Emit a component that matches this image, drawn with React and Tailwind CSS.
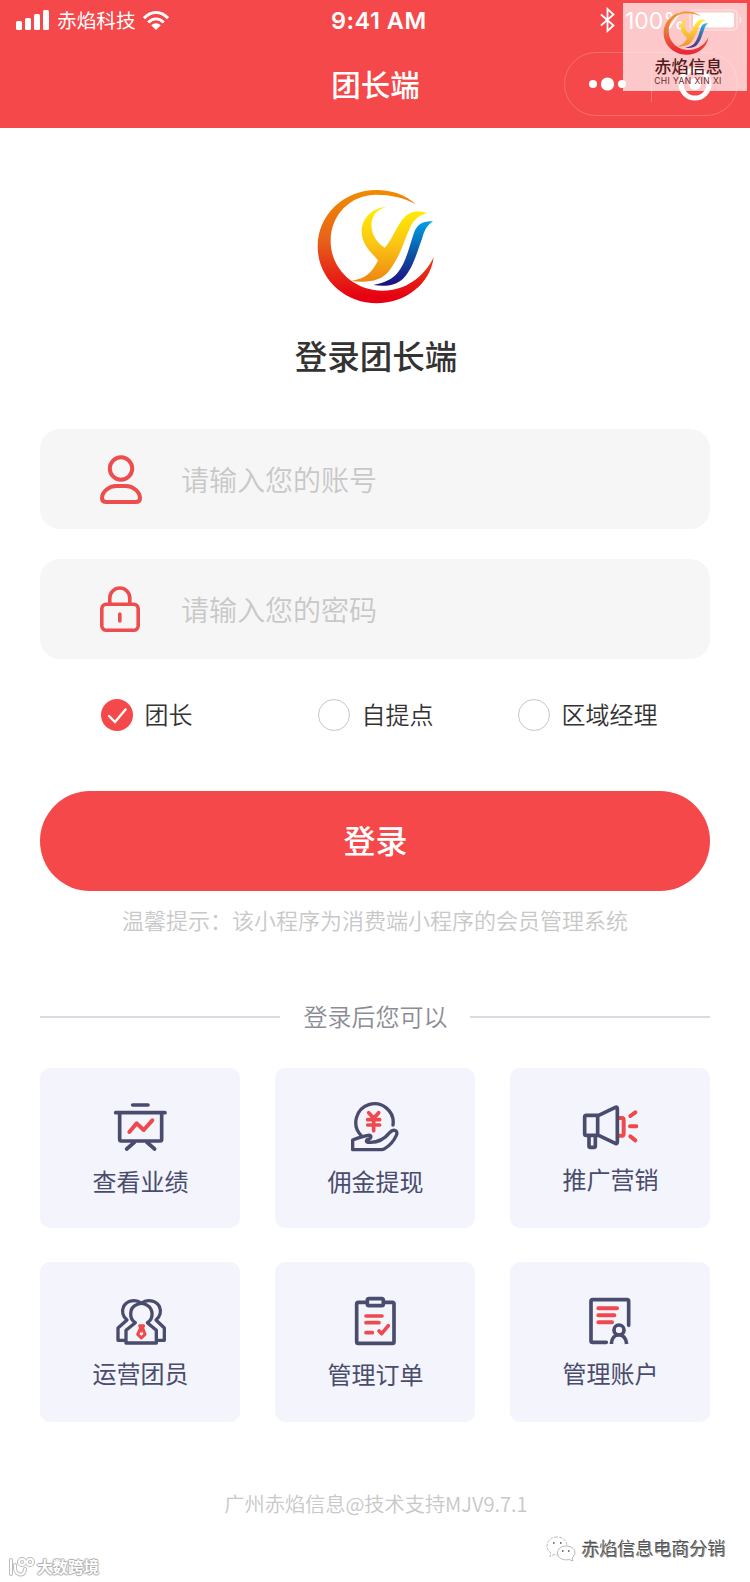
import React, { useState } from 'react';

const roles = [
  { id: 'leader', label: '团长', width: 'w-[217px]' },
  { id: 'pickup', label: '自提点', width: 'w-[200px]' },
  { id: 'manager', label: '区域经理', width: 'w-[145px]' },
];

const Logo = ({ id, className }) => (
  <svg viewBox="108 56 357 345" className={className} preserveAspectRatio="none">
    <defs>
      <linearGradient id={`${id}-ring`} x1="0" y1="0" x2="0" y2="1">
        <stop offset="0" stopColor="#f08c00" />
        <stop offset="0.45" stopColor="#e8601a" />
        <stop offset="0.95" stopColor="#e60012" />
      </linearGradient>
      <linearGradient id={`${id}-y`} x1="0" y1="0" x2="0" y2="1">
        <stop offset="0" stopColor="#fff000" />
        <stop offset="0.5" stopColor="#fac514" />
        <stop offset="1" stopColor="#ee8512" />
      </linearGradient>
      <linearGradient id={`${id}-j`} x1="0" y1="0" x2="0" y2="1">
        <stop offset="0" stopColor="#00a0e9" />
        <stop offset="0.5" stopColor="#0b55a5" />
        <stop offset="0.95" stopColor="#1d1383" />
      </linearGradient>
    </defs>
    <path
      fill={`url(#${id}-ring)`}
      d="M408 102C376 73 335 59 290 59C192 59 113 133 113 229C113 324 194 399 290 399C376 399 452 340 461 261C431 322 375 361 309 361C219 361 152 294 152 212C152 131 214 73 288 73C334 73 375 83 408 102Z"
    />
    <path
      fill={`url(#${id}-y)`}
      d="M318 110C276 113 245 144 245 184C246 224 274 246 294 270C276 309 256 324 214 332C262 337 302 334 327 302C363 256 374 203 393 166C402 147 419 134 442 128C418 120 392 121 373 141C349 168 336 210 314 232C289 215 271 190 275 155C279 131 294 117 318 110Z"
    />
    <path
      fill={`url(#${id}-j)`}
      d="M459 153C430 151 412 160 402 187C386 235 377 277 354 306C338 326 315 338 280 344C315 349 347 346 369 325C399 295 411 245 426 205C433 181 441 164 459 153Z"
    />
  </svg>
);

const cardIcon = 'h-[54px] w-[60px] shrink-0';
const dark = { fill: 'none', stroke: '#4a4c6d', strokeWidth: 10, strokeLinecap: 'round', strokeLinejoin: 'round' };
const red = { ...dark, stroke: '#ee4a4d' };

const ChartIcon = () => (
  <svg viewBox="240 120 180 162" className={cardIcon}>
    <path {...dark} strokeWidth="11" d="M308 135H354M257 158H405M269 160V238Q269 243 274 243H390Q395 243 395 238V160M314 246L290 267M350 246L374 267" />
    <path {...red} strokeWidth="12" d="M298 216L320 190L341 210L367 181" />
  </svg>
);

const CashIcon = () => (
  <svg viewBox="240 120 180 162" className={cardIcon}>
    <path {...dark} d="M288 226A56 56 0 1 1 384 195" />
    <path {...dark} strokeLinecap="butt" d="M263 269V240C275 235 296 228 309 226C323 224 319 237 306 239C303 243 303 246 309 247C342 250 361 234 374 218C385 205 401 211 394 226C385 246 372 258 359 266Q355 269 349 269Z" />
    <path {...red} strokeWidth="11" d="M311 158L326 175L341 158M326 175V212M308 179H344M308 195H344" />
  </svg>
);

const HornIcon = () => (
  <svg viewBox="240 120 180 162" className={cardIcon}>
    <path {...red} strokeWidth="12" d="M356 174H366Q371 174 371 179V222Q371 227 366 227H356M391 168L406 157M390 199H409M391 229L406 241" />
    <path {...dark} strokeWidth="11" d="M259 166H296L346 142Q352 139 352 146V246Q352 253 346 250L296 226H259Q254 226 254 221V171Q254 166 259 166ZM293 168V225M267 230V258Q267 262 271 262H282Q286 262 286 258V230" />
  </svg>
);

const TeamIcon = () => (
  <svg viewBox="240 117 180 162" className={cardIcon}>
    <path {...dark} strokeLinecap="butt" d="M333 144C318 132 291 136 281 154C274 169 279 185 291 195L264 219V256H287M335 144C350 132 378 136 388 154C395 169 390 185 378 195L403 219V256H380" />
    <path {...dark} d="M316 203C296 191 299 160 316 151C328 144 342 144 352 151C370 162 372 191 352 203L379 226V264H288V226Z" />
    <path fill="#f3f4fc" d="M322 198H346V212H322Z" />
    <path {...red} strokeWidth="9" d="M329 212H341L338 219L345 238L334 249L323 238L332 219Z" />
    <path {...red} strokeWidth="6" d="M334 218V230" />
  </svg>
);

const OrderIcon = () => (
  <svg viewBox="240 117 180 162" className={cardIcon}>
    <path {...dark} strokeWidth="11" d="M305 142H280Q275 142 275 147V260Q275 265 280 265H382Q387 265 387 260V147Q387 142 382 142H357M312 131H350Q355 131 355 136V147Q355 152 350 152H312Q307 152 307 147V136Q307 131 312 131Z" />
    <path {...red} strokeWidth="11" d="M303 183H351M303 203H342M303 233H322M342 228L350 236L370 212" />
  </svg>
);

const AccountIcon = () => (
  <svg viewBox="945 117 180 162" className={cardIcon}>
    <path {...dark} strokeWidth="11" d="M1091 211V139Q1091 134 1086 134H983Q978 134 978 139V257Q978 262 983 262H1024" />
    <circle {...dark} strokeWidth="11" cx="1062" cy="225" r="15" />
    <path {...dark} strokeWidth="11" strokeLinecap="butt" d="M1039 267C1041 230 1082 230 1085 267" />
    <path {...red} strokeWidth="12" d="M1000 160H1056M1000 181H1048M1000 202H1041" />
  </svg>
);

const features = [
  { label: '查看业绩', icon: ChartIcon, pad: 'mt-[9px]' },
  { label: '佣金提现', icon: CashIcon, pad: 'mt-[9px]' },
  { label: '推广营销', icon: HornIcon, pad: 'mt-[7px]' },
  { label: '运营团员', icon: TeamIcon, pad: 'mt-[7px]' },
  { label: '管理订单', icon: OrderIcon, pad: 'mt-[8px]' },
  { label: '管理账户', icon: AccountIcon, pad: 'mt-[7px]' },
];

const StatusBar = () => (
  <div className="flex h-10 items-center pl-4 font-['Inter','Noto_Sans_CJK_SC',sans-serif]">
    <svg viewBox="0 0 33 20" className="h-5 w-[33px]" fill="#fff">
      <rect x="0" y="11" width="6" height="9" rx="1.5" />
      <rect x="9" y="8" width="6" height="12" rx="1.5" />
      <rect x="18" y="4" width="6" height="16" rx="1.5" />
      <rect x="27" y="0" width="6" height="20" rx="1.5" />
    </svg>
    <span className="ml-2 w-[86px] pt-px text-[19.7px] leading-10">赤焰科技</span>
    <svg viewBox="0 0 26 19" className="h-[19px] w-[26px]" fill="none" stroke="#fff" strokeWidth="3">
      <path d="M1 7.2C8-0.4 18-0.4 25 7.2M5.2 11.5C10 6.8 16 6.8 20.8 11.5" />
      <path fill="#fff" stroke="none" d="M8.2 14.3C11 11.6 15 11.6 17.8 14.3L13 19Z" />
    </svg>
    <span className="ml-[162px] w-[269px] pt-px text-[23.5px] font-semibold leading-10 tracking-[0.5px]">9:41 AM</span>
    <svg viewBox="0 0 15 26" className="h-[26px] w-[15px]" fill="none" stroke="#fff" strokeWidth="1.8">
      <path d="M1 7.5L13.5 18.5L7.5 24V2L13.5 7.5L1 18.5" />
    </svg>
    <span className="ml-[10px] w-[64px] pt-px text-[23px] leading-10">100%</span>
    <svg viewBox="0 0 54 22" className="h-[22px] w-[54px]" fill="#fff">
      <rect x="1" y="1" width="47" height="20" rx="4" fill="none" stroke="#fff" strokeOpacity="0.4" strokeWidth="1.6" />
      <rect x="4" y="3.5" width="41" height="15" rx="2" />
      <path opacity="0.5" d="M50.5 7.5C53.5 8.5 53.5 13.5 50.5 14.5Z" />
    </svg>
  </div>
);

const Header = () => (
  <header className="relative h-32 bg-[#f5484a] text-white">
    <StatusBar />
    <div className="flex h-[87px] items-center justify-center pl-px text-[29.5px] font-medium">团长端</div>
    <div className="absolute right-3 top-[52px] flex h-16 w-[174px] items-center rounded-full border border-white/20">
      <svg viewBox="0 0 38 14" className="ml-6 h-[14px] w-[38px]" fill="#fff">
        <circle cx="4" cy="7" r="4" />
        <circle cx="18.5" cy="7" r="6.6" />
        <circle cx="33" cy="7" r="4" />
      </svg>
      <div className="ml-6 h-9 w-px bg-white/25" />
      <svg viewBox="0 0 34 34" className="ml-[26px] h-[34px] w-[34px]">
        <circle cx="17" cy="17" r="14" fill="none" stroke="#fff" strokeWidth="5" />
        <circle cx="17" cy="17" r="6" fill="#fff" />
      </svg>
    </div>
    {/* brand badge over the corner */}
    <div className="absolute right-[3px] top-[3px] flex h-[88px] w-[124px] flex-col items-center bg-white/70">
      <Logo id="badge" className="ml-[2px] mt-[8px] h-[44px] w-[46px] shrink-0 opacity-80" />
      <span className="ml-[7px] mt-[2px] text-[17px] font-medium leading-[18px] text-[#521a1d]">赤焰信息</span>
      <span className="ml-[6px] mt-[2px] whitespace-nowrap font-['Inter',sans-serif] text-[8.5px] leading-[9px] tracking-[0.4px] text-[#6b2a2d]">CHI YAN XIN XI</span>
    </div>
  </header>
);

const Field = ({ icon, placeholder }) => (
  <div className="flex h-[100px] items-center rounded-[20px] bg-[#f6f6f6] pl-[60px]">
    <div className="w-[81px]">{icon}</div>
    <span className="pb-px text-[28px] font-[350] text-[#c8c8c8]">{placeholder}</span>
  </div>
);

const App = () => {
  const [role, setRole] = useState('leader');

  return (
    <div className="relative flex h-[1582px] w-[750px] flex-col overflow-hidden bg-white font-['Noto_Sans_CJK_SC',sans-serif]">
      <Header />
      <main className="flex flex-col px-10">
        <Logo id="main" className="mt-[61px] h-[115px] w-[119px] self-center" />
        <h1 className="mt-[27px] pl-[2px] text-center text-[32.5px] font-medium leading-[48px] text-[#333]">登录团长端</h1>

        <div className="mt-[50px] flex flex-col gap-[30px]">
          <Field
            placeholder="请输入您的账号"
            icon={
              <svg viewBox="0 0 42 50" className="mt-[2px] h-[50px] w-[42px]" fill="none" stroke="#ee4d4f" strokeWidth="4">
                <circle cx="21" cy="13.5" r="11.2" />
                <path d="M16 31H26C33 31 40 37 40 43Q40 47 35.5 47H6.5Q2 47 2 43C2 37 9 31 16 31Z" />
              </svg>
            }
          />
          <Field
            placeholder="请输入您的密码"
            icon={
              <svg viewBox="0 0 40 46" className="h-[46px] w-10" fill="none" stroke="#ee4d4f" strokeWidth="3.6">
                <rect x="1.8" y="18.3" width="36.4" height="25.9" rx="4.5" />
                <path d="M9.8 18V12A10 10 0 0 1 29.8 12V18" />
                <path strokeLinecap="round" d="M19.8 28V35" />
              </svg>
            }
          />
        </div>

        <div className="mt-10 flex h-8 items-center pl-[61px]">
          {roles.map(item => (
            <button key={item.id} className={`flex items-center text-left ${item.width}`} onClick={() => setRole(item.id)}>
              {role === item.id ? (
                <svg viewBox="0 0 32 32" className="h-8 w-8 shrink-0">
                  <circle cx="16" cy="16" r="16" fill="#f5484a" />
                  <path d="M8 17L14 23L24.5 10.5" fill="none" stroke="#fff" strokeWidth="2.4" strokeLinecap="round" />
                </svg>
              ) : (
                <span className="h-8 w-8 shrink-0 rounded-full border border-[#c8c8c8]" />
              )}
              <span className="-mt-[3px] ml-[11.5px] whitespace-nowrap text-[24px] leading-8 font-[350] text-[#333]">{item.label}</span>
            </button>
          ))}
        </div>

        <button className="mt-[60px] h-[100px] rounded-full bg-[#f5484a] pb-[4px] pl-px text-[32px] font-medium text-white">登录</button>
        <p className="mt-[12px] text-center text-[22px] font-[350] leading-8 text-[#c8c8c8]">温馨提示：该小程序为消费端小程序的会员管理系统</p>

        <div className="mt-[64px] flex h-9 items-center justify-between">
          <div className="h-[2px] w-[240px] bg-[#d9dbe3]" />
          <span className="pb-[2px] pl-px text-[24px] font-[350] text-[#8b8c96]">登录后您可以</span>
          <div className="h-[2px] w-[240px] bg-[#d9dbe3]" />
        </div>

        <div className="mt-[33px] grid grid-cols-3 gap-x-[35px] gap-y-[34px]">
          {features.map(({ label, icon: Icon, pad }) => (
            <div key={label} className="flex h-40 flex-col items-center rounded-[10px] bg-[#f3f4fc] pt-8">
              <Icon />
              <span className={`pl-px text-[24px] leading-9 text-[#4a4c6d] ${pad}`}>{label}</span>
            </div>
          ))}
        </div>

        <p className="mt-[66px] pl-[2px] text-center text-[20.2px] font-[350] leading-8 text-[#c8c8c8]">广州赤焰信息@技术支持MJV9.7.1</p>
      </main>

      {/* corner signatures */}
      <div className="absolute bottom-[18px] right-[25px] flex items-center">
        <svg viewBox="0 0 30 26" className="mr-[5px] h-[26px] w-[30px]" fill="#fff" stroke="#a8a8a8" strokeWidth="0.8">
          <path strokeDasharray="3 1.2" d="M11 1C5 1 1 5 1 10C1 13 2.5 15.5 5 17L4 20.5L8 18.5C15 20 21 16 21 10C21 5 17 1 11 1Z" />
          <path d="M20 10C15 10 11.5 13 11.5 17C11.5 22 17 25 23 23.5L27 25L26 22C32 17 28 10 20 10Z" />
          <path fill="#777" stroke="none" d="M7 6h1.5v2H7zM14 6h1.5v2H14zM16 14h1.5v2H16zM22 14h1.5v2H22z" />
        </svg>
        <span className="pb-[3px] text-[18px] font-[350] leading-7 text-[#555] [text-shadow:-1px_-1px_0_#fff,1px_1px_0_#888]">赤焰信息电商分销</span>
      </div>
      <div className="absolute bottom-[2px] left-2 flex items-center">
        <svg viewBox="0 0 28 20" className="mr-[1px] h-5 w-7" fill="none" strokeLinecap="round">
          <g stroke="#bbb" strokeWidth="4">
            <path d="M3 3V17M7 8C6 20 17 20 17 12" />
            <circle cx="14" cy="5" r="3" />
            <circle cx="22" cy="5" r="3" />
          </g>
          <g stroke="#fff" strokeWidth="2">
            <path d="M3 3V17M7 8C6 20 17 20 17 12" />
            <circle cx="14" cy="5" r="3" />
            <circle cx="22" cy="5" r="3" />
          </g>
        </svg>
        <span className="pb-[2px] text-[15.5px] font-bold leading-6 text-white [text-shadow:1px_0_1px_#aaa,-1px_0_1px_#aaa,0_1px_1px_#aaa,0_-1px_1px_#aaa]">大数跨境</span>
      </div>
    </div>
  );
};

export default App;
